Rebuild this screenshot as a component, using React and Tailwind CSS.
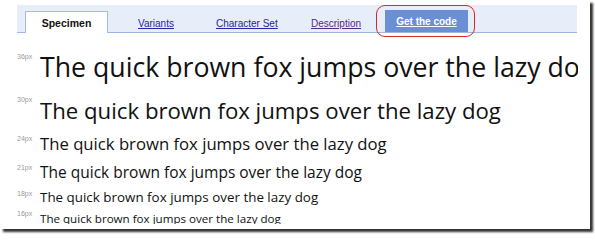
import React from "react";

const rows = [
  { label: "36px", size: "text-[26.7px]", pt: "pt-[1px]", mt: "mt-[20px]" },
  { label: "30px", size: "text-[22.2px]", pt: "pt-[4px]", mt: "mt-[15px]" },
  { label: "24px", size: "text-[16.7px]", pt: "pt-[1px]", mt: "mt-[13px]" },
  { label: "21px", size: "text-[15.5px]", pt: "pt-[1px]", mt: "mt-[11px]" },
  { label: "18px", size: "text-[13.4px]", pt: "pt-[1px]", mt: "mt-[10px]" },
  { label: "16px", size: "text-[11.6px]", pt: "pt-[3px]", mt: "mt-[5px]" },
];

export default function App() {
  return (
    <div className="w-[595px] h-[234px] bg-white overflow-hidden">
      <div className="w-[590px] h-[229px] bg-white shadow-[3px_3px_2px_rgba(0,0,0,0.8)] flex flex-col">
        {/* Tab bar */}
        <div
          className="relative ml-[17px] mt-[5px] w-[560px] h-[28px] bg-[#e8eef9] border-b border-[#a0b4dc] flex items-end"
          style={{ fontFamily: '"Liberation Sans", Arial, sans-serif' }}
        >
          <div className="ml-[8px] w-[83px] h-[22px] -mb-px bg-white border border-b-0 border-[#a8badf] flex items-center justify-center pt-[2px] text-[10.5px] font-bold text-[#111]">
            Specimen
          </div>
          <div className="ml-[30px] w-[78px] h-[22px] flex items-center pt-[4px]">
            <span className="text-[10px] text-[#2424a6] underline">Variants</span>
          </div>
          <div className="w-[95px] h-[22px] flex items-center pt-[4px]">
            <span className="text-[10px] text-[#2424a6] underline">Character Set</span>
          </div>
          <div className="w-[74px] h-[22px] flex items-center pt-[4px]">
            <span className="text-[10px] text-[#4f2a86] underline">Description</span>
          </div>
          <div className="w-[83px] h-[22px] bg-[#6b8fd6] flex items-center justify-center">
            <span className="text-[10px] font-bold text-white underline">Get the code</span>
          </div>
          <div className="absolute left-[359px] top-0 w-[99px] h-[32px] border-[1.5px] border-[#d42a2a] rounded-[9px]" />
        </div>

        {/* Specimen rows */}
        <div className="pl-[17px] w-[578px] overflow-hidden flex flex-col">
          {rows.map((r) => (
            <div key={r.label} className={`flex items-start whitespace-nowrap ${r.mt}`}>
              <span
                className="w-[23px] shrink-0 text-[7px] leading-none text-[#9a9a9a]"
                style={{ fontFamily: '"Liberation Sans", Arial, sans-serif' }}
              >
                {r.label}
              </span>
              <span
                className={`${r.size} ${r.pt} leading-none text-[#111]`}
                style={{ fontFamily: '"Open Sans", sans-serif' }}
              >
                The quick brown fox jumps over the lazy dog
              </span>
            </div>
          ))}
        </div>
      </div>
    </div>
  );
}
